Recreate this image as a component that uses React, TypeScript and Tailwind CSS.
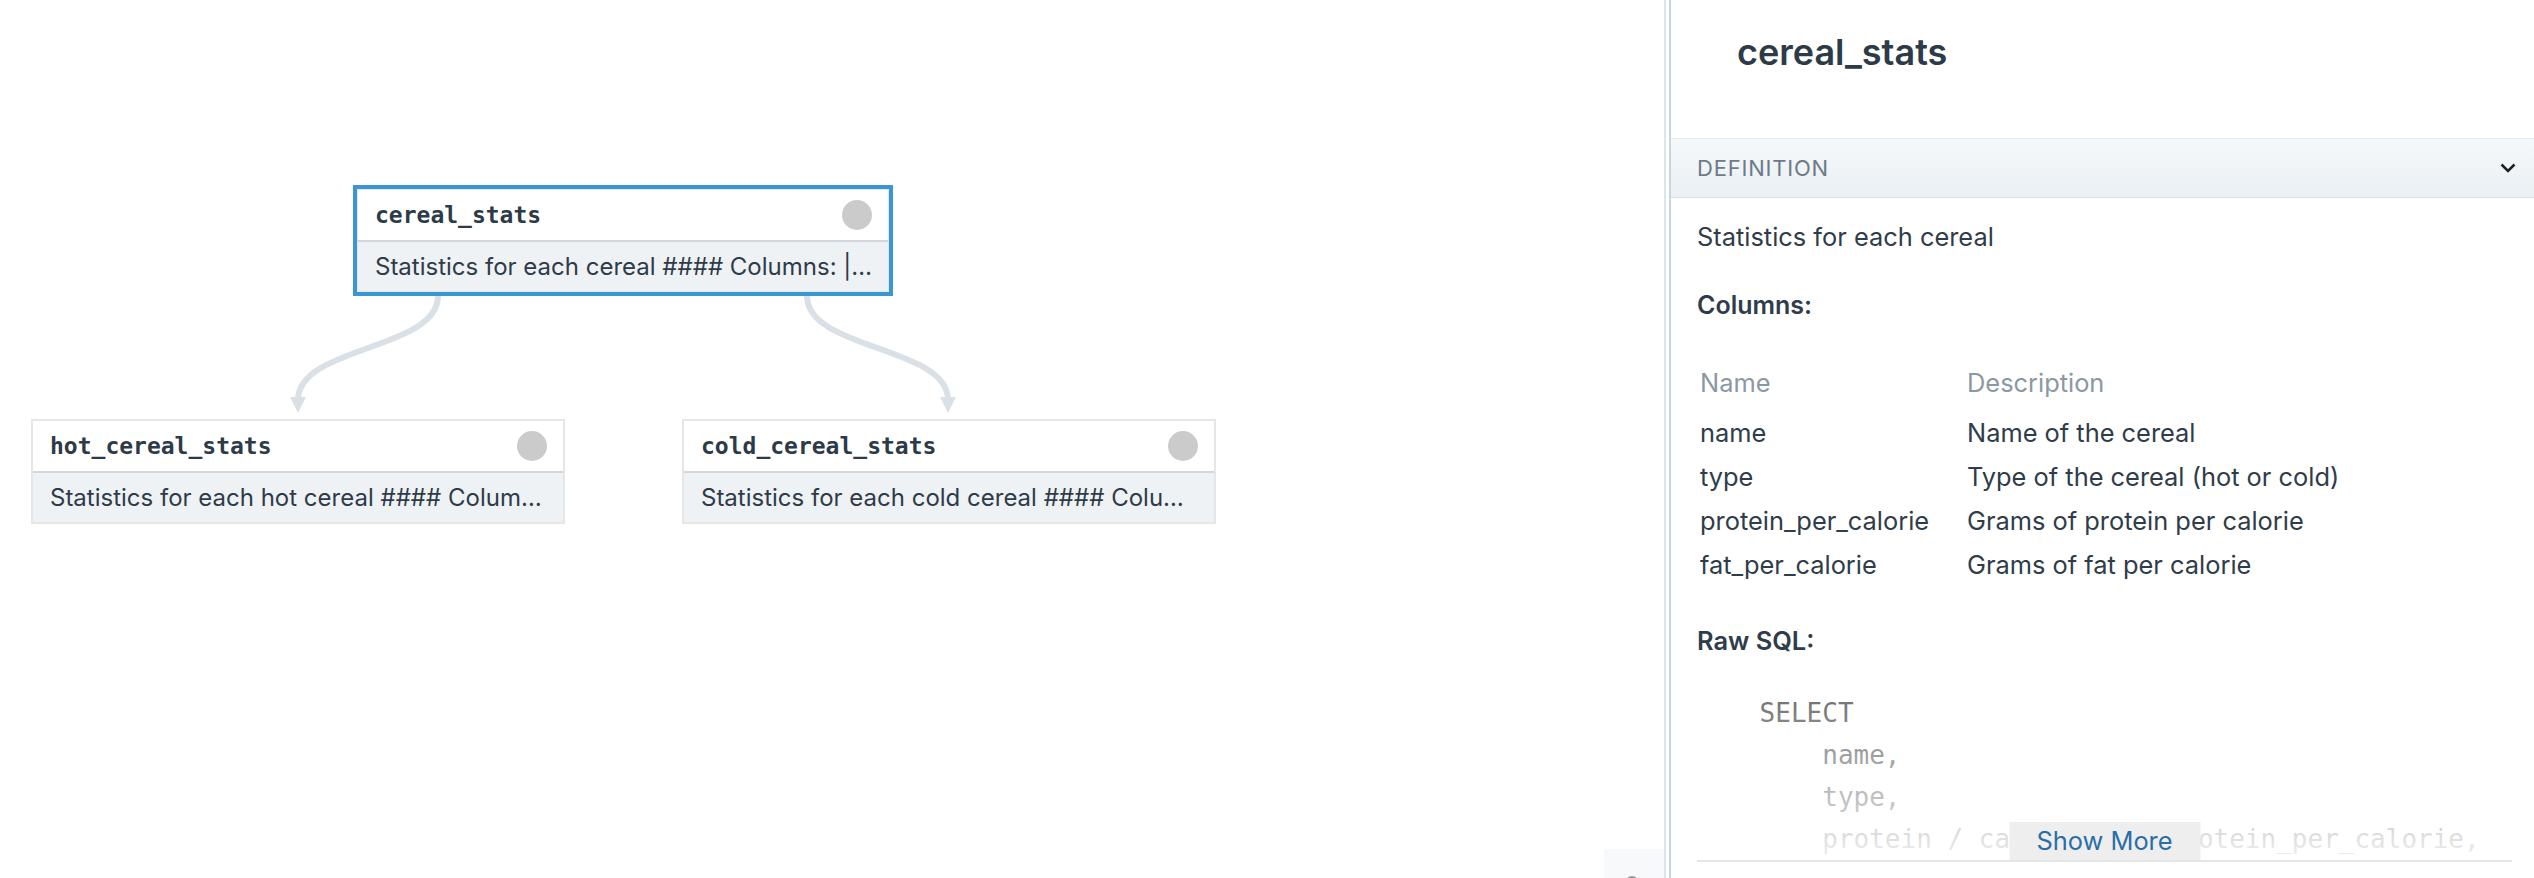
import React from "react";

type NodeProps = {
  title: string;
  desc: string;
  selected?: boolean;
  pos: string;
};

function AssetNode({ title, desc, selected, pos }: NodeProps) {
  return (
    <div
      className={`absolute ${pos} flex h-[105px] w-[534px] flex-col border-2 border-[#e4e6e8] bg-white ${
        selected ? "outline-4 -outline-offset-1 outline-[#3a97d4]" : ""
      }`}
    >
      <div className="flex h-[52px] items-center justify-between border-b-2 border-[#d3d7db] pl-[17px] pr-[16px]">
        <span className="font-['DejaVu_Sans_Mono',monospace] text-[23px] font-bold text-[#2d3a47]">{title}</span>
        <span className="h-[30px] w-[30px] rounded-full bg-[#cbcbcb]" />
      </div>
      <div className="flex flex-1 items-center overflow-hidden whitespace-nowrap bg-[#eef2f5] pl-[17px] pr-[12px] text-[24px] text-[#2f3b48]">
        {desc}
      </div>
    </div>
  );
}

const rows: [string, string][] = [
  ["name", "Name of the cereal"],
  ["type", "Type of the cereal (hot or cold)"],
  ["protein_per_calorie", "Grams of protein per calorie"],
  ["fat_per_calorie", "Grams of fat per calorie"],
];

const sql = [
  "    SELECT",
  "        name,",
  "        type,",
  "        protein / calories AS protein_per_calorie,",
  "        fat / calories AS fat_per_calorie",
  "    FROM cereals",
].join("\n");

export default function App() {
  return (
    <div className="flex h-[878px] w-[2534px] overflow-hidden bg-white font-['Inter',sans-serif] text-[#2f3c4a]">
      {/* Canvas */}
      <div className="relative h-full w-[1664px] shrink-0 bg-white">
        <svg className="absolute left-0 top-0" width="1664" height="878" viewBox="0 0 1664 878">
          <path d="M438 296 C438 350 298 346 298 400" stroke="#d9e1e7" strokeWidth="6" fill="none" />
          <polygon points="290,397 306,397 298,413" fill="#d9e1e7" />
          <path d="M807 296 C807 350 948 346 948 400" stroke="#d9e1e7" strokeWidth="6" fill="none" />
          <polygon points="940,397 956,397 948,413" fill="#d9e1e7" />
        </svg>
        <AssetNode
          pos="left-[356px] top-[188px]"
          title="cereal_stats"
          desc="Statistics for each cereal #### Columns: |…"
          selected
        />
        <AssetNode
          pos="left-[31px] top-[419px]"
          title="hot_cereal_stats"
          desc="Statistics for each hot cereal #### Colum…"
        />
        <AssetNode
          pos="left-[682px] top-[419px]"
          title="cold_cereal_stats"
          desc="Statistics for each cold cereal #### Colu…"
        />
        <div className="absolute left-[1604px] top-[849px] h-[40px] w-[60px] bg-[#f8f9fa]">
          <span className="absolute left-[21px] top-[27px] h-[14px] w-[14px] rounded-full border-2 border-[#9a9a9a]" />
        </div>
      </div>

      {/* Split handle */}
      <div className="h-full w-[7px] shrink-0 border-l-2 border-r-2 border-l-[#dde5ec] border-r-[#c8d4de]" />

      {/* Right panel */}
      <div className="flex h-full w-[863px] shrink-0 flex-col">
        <div className="h-[138px] shrink-0 pl-[66px] pt-[31px]">
          <h1 className="text-[36px] font-semibold leading-[42px] text-[#2d3a48]">cereal_stats</h1>
        </div>
        <div className="flex h-[60px] shrink-0 items-center justify-between border-b border-t border-b-[#d8dfe5] border-t-[#e8edf1] bg-linear-to-b from-[#f5f8fa] to-[#ebf0f4] pl-[26px] pr-[18px]">
          <span className="text-[22px] uppercase tracking-[0.8px] text-[#6c7b89]">Definition</span>
          <svg width="16" height="10" viewBox="0 0 16 10">
            <polyline points="1.5,1.5 8,8 14.5,1.5" fill="none" stroke="#1f1f1f" strokeWidth="2.5" />
          </svg>
        </div>
        <div className="pl-[26px] pr-[22px]">
          <p className="mt-[23px] text-[25.4px] leading-[32px]">Statistics for each cereal</p>
          <p className="mt-[36px] text-[25px] font-semibold leading-[32px]">Columns:</p>
          <div className="mt-[40px] pl-[3px] text-[25.4px]">
            <div className="grid h-[44px] grid-cols-[267px_1fr] items-center text-[#8b98a4]">
              <span>Name</span>
              <span>Description</span>
            </div>
            <div className="mt-[6px]">
              {rows.map(([n, d]) => (
                <div key={n} className="grid h-[44px] grid-cols-[267px_1fr] items-center">
                  <span>{n}</span>
                  <span>{d}</span>
                </div>
              ))}
            </div>
          </div>
          <p className="mt-[38px] text-[25.4px] font-semibold leading-[32px]">Raw SQL:</p>
          <div className="relative mt-[35px] h-[170px] overflow-hidden border-b-2 border-[#e6e6e6]">
            <pre className="font-['DejaVu_Sans_Mono',monospace] text-[26px] leading-[42px] text-[#6e6e6e]">{sql}</pre>
            <div className="absolute inset-0 bg-linear-to-b from-white/0 to-white/90" />
            <button className="absolute bottom-0 left-1/2 flex h-[38px] w-[191px] -translate-x-1/2 items-center justify-center bg-[#eeeeee] text-[25.4px] text-[#2b6ea6]">
              Show More
            </button>
          </div>
        </div>
      </div>
    </div>
  );
}
